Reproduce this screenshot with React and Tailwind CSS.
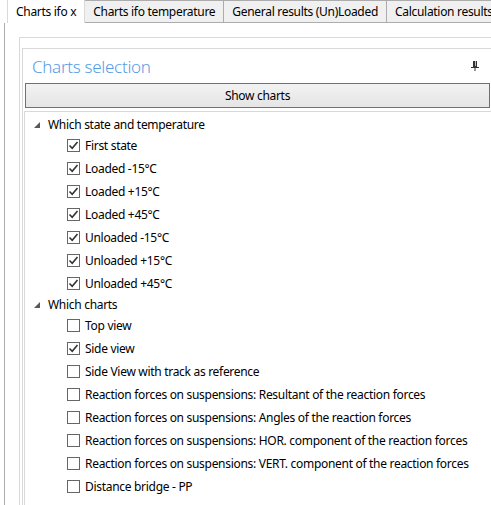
const states = [
  'First state',
  'Loaded -15°C',
  'Loaded +15°C',
  'Loaded +45°C',
  'Unloaded -15°C',
  'Unloaded +15°C',
  'Unloaded +45°C',
];

const charts = [
  { label: 'Top view', checked: false },
  { label: 'Side view', checked: true },
  { label: 'Side View with track as reference', checked: false },
  { label: 'Reaction forces on suspensions: Resultant of the reaction forces', checked: false },
  { label: 'Reaction forces on suspensions: Angles of the reaction forces', checked: false },
  { label: 'Reaction forces on suspensions: HOR. component of the reaction forces', checked: false },
  { label: 'Reaction forces on suspensions: VERT. component of the reaction forces', checked: false },
  { label: 'Distance bridge - PP', checked: false },
];

const tabs = ['Charts ifo temperature', 'General results (Un)Loaded', 'Calculation results'];

function Box({ checked }) {
  return (
    <span className="w-[13px] h-[13px] border border-[#666] bg-white flex items-center justify-center shrink-0">
      {checked && (
        <svg width="11" height="11" viewBox="0 0 11 11">
          <path d="M1.5 5.5 L4.2 8.2 L9.5 2" fill="none" stroke="#333" strokeWidth="1.6" />
        </svg>
      )}
    </span>
  );
}

function Group({ title, children }) {
  return (
    <div>
      <div className="h-[19px] flex items-center">
        <svg width="6" height="6" viewBox="0 0 6 6" className="ml-[9px] mr-[8px]">
          <polygon points="6,0 6,6 0,6" fill="#595959" />
        </svg>
        <span>{title}</span>
      </div>
      {children}
    </div>
  );
}

function Item({ label, checked }) {
  return (
    <div className="h-[23px] flex items-center pl-[42px] gap-[5px]">
      <Box checked={checked} />
      <span className="whitespace-nowrap">{label}</span>
    </div>
  );
}

export default function App() {
  return (
    <div className="w-[491px] h-[505px] bg-white overflow-hidden text-[12px] tracking-[-0.3px] text-black" style={{ fontFamily: '"Segoe UI", "Noto Sans", sans-serif' }}>
      <div className="flex h-[23px] pl-[7px]">
        <div className="h-[23px] px-[8px] flex items-center bg-white border-l border-r border-[#d9d9d9] whitespace-nowrap">
          Charts ifo x
        </div>
        {tabs.map(t => (
          <div key={t} className="h-[23px] px-[8px] flex items-center bg-[#f0f0f0] border-r border-b border-t border-[#acacac] whitespace-nowrap">
            {t}
          </div>
        ))}
      </div>

      <div className="ml-[4px] h-[482px] border-l border-[#acacac] pt-[14px] pl-[14px]">
        <div className="h-full border-l border-t border-[#d9d9d9] pt-[10px] pl-[2px]">
          <div className="h-full border-l border-t border-[#d9d9d9]">
            <div className="h-[34px] flex items-center justify-between pl-[9px] pr-[12px]">
              <span className="text-[17px] text-[#569de5] font-light leading-none">Charts selection</span>
              <svg width="8" height="10" viewBox="0 0 8 10">
                <rect x="2" y="0" width="4" height="6" fill="#333" />
                <rect x="4" y="0" width="1" height="5" fill="#bbb" />
                <rect x="0" y="6" width="8" height="1" fill="#333" />
                <rect x="3.5" y="7" width="1" height="3" fill="#333" />
              </svg>
            </div>
            <div className="ml-[2px] w-[465px] h-[25px] border border-[#3c7fb1] bg-gradient-to-b from-[#f2f2f2] to-[#e5e5e5] flex items-center justify-center">
              Show charts
            </div>
            <div className="mt-[3px] ml-[1px] border-t border-l border-[#d9d9d9] pt-[3px] h-full">
              <Group title="Which state and temperature">
                {states.map(s => (
                  <Item key={s} label={s} checked />
                ))}
              </Group>
              <Group title="Which charts">
                {charts.map(c => (
                  <Item key={c.label} label={c.label} checked={c.checked} />
                ))}
              </Group>
            </div>
          </div>
        </div>
      </div>
    </div>
  );
}
